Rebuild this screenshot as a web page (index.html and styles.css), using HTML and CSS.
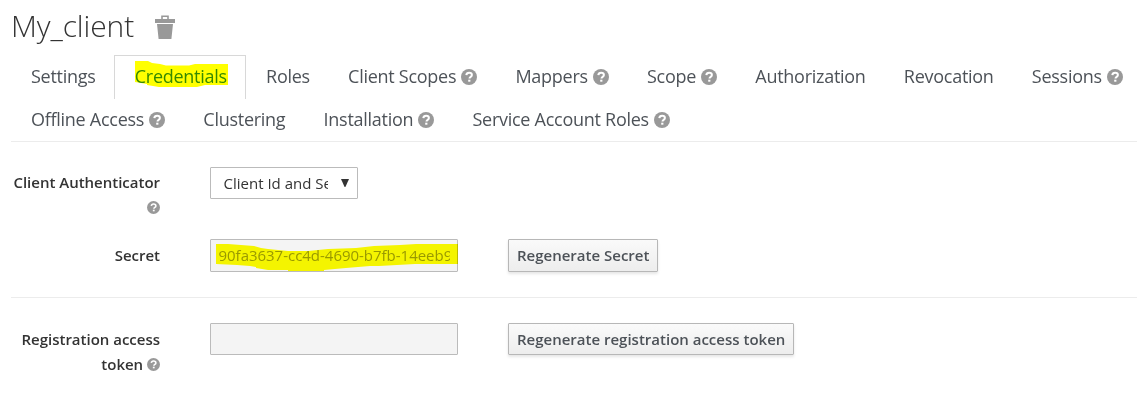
FILE: index.html
```
<!DOCTYPE html>
<html lang="en">
<head>
<meta charset="utf-8">
<title>My_client</title>
<link rel="stylesheet" href="styles.css">
</head>
<body>
<svg width="0" height="0" class="defs" aria-hidden="true">
  <symbol id="help" viewBox="0 0 16 16">
    <circle cx="8" cy="8" r="8" fill="#999"/>
    <path d="M5.3 6.1C5.5 4.5 6.5 3.7 8.1 3.7c1.7 0 2.8.9 2.8 2.3 0 1.9-2.4 1.9-2.4 3.5" fill="none" stroke="#fff" stroke-width="2"/>
    <rect x="7.2" y="10.7" width="2.2" height="2" fill="#fff"/>
  </symbol>
</svg>
<main class="page">
  <header class="title">
    <h1>My_client</h1>
    <svg class="trash" viewBox="0 0 20 24">
      <path d="M7 4V1.2h6V4" fill="none" stroke="#999" stroke-width="1.6"/>
      <path d="M0 4h20v4H0zM2 9h16l-1.6 15H3.6z" fill="#999"/>
    </svg>
  </header>
  <nav class="tabs">
    <div class="row">
      <a class="tab">Settings</a>
      <a class="tab active">Credentials
        <svg class="marker mark-tab" viewBox="0 0 94 27"><path d="M0 0H13L17 2 25 3 31 4.4H54L60 3H93V24H70L62 26H24L12 24V23L0 21Z" fill="#ff0"/></svg></a>
      <a class="tab">Roles</a>
      <a class="tab">Client Scopes<svg class="help"><use href="#help"/></svg></a>
      <a class="tab">Mappers<svg class="help"><use href="#help"/></svg></a>
      <a class="tab">Scope<svg class="help"><use href="#help"/></svg></a>
      <a class="tab">Authorization</a>
      <a class="tab">Revocation</a>
      <a class="tab">Sessions<svg class="help"><use href="#help"/></svg></a>
    </div>
    <div class="row">
      <a class="tab">Offline Access<svg class="help"><use href="#help"/></svg></a>
      <a class="tab">Clustering</a>
      <a class="tab">Installation<svg class="help"><use href="#help"/></svg></a>
      <a class="tab">Service Account Roles<svg class="help"><use href="#help"/></svg></a>
    </div>
  </nav>
  <section class="form">
    <div class="group auth">
      <label>Client Authenticator <svg class="help small"><use href="#help"/></svg></label>
      <div class="select"><span>Client Id and Secret</span><svg viewBox="0 0 8 8"><path d="M0 0H8L4.4 8H3.6Z" fill="#333"/></svg></div>
    </div>
    <div class="group secret">
      <label>Secret</label>
      <div class="field"><span>90fa3637-cc4d-4690-b7fb-14eeb9</span>
        <svg class="marker mark-secret" viewBox="0 0 242 28"><path d="M0 0H12L38 2 45 4 52 5 72 7H92L112 5 140 4 158 2 184 1 200 0H242V20H199L163 22 154 22 130 24 108 26V27H72V26L52 26 40 24V23L34 22 21 21 0 20Z" fill="#ff0"/></svg></div>
      <button>Regenerate Secret</button>
    </div>
    <div class="group token">
      <label>Registration access token <svg class="help small"><use href="#help"/></svg></label>
      <div class="field"></div>
      <button>Regenerate registration access token</button>
    </div>
  </section>
</main>
</body>
</html>
```
FILE: styles.css
```
* { box-sizing: border-box; }
body {
  margin: 0;
  background: #fff;
  color: #333;
  font-family: "Open Sans", sans-serif;
  overflow: hidden;
}
.defs { position: absolute; }
.page { padding-left: 11px; }
.title { display: flex; height: 55px; }
h1 { margin: 5px 0 0; font-size: 30px; line-height: 42px; font-weight: 300; letter-spacing: -.1px; width: 144px; white-space: nowrap; }
.trash { width: 20px; height: 24px; margin-top: 15px; }
.tabs { height: 87px; border-bottom: 1px solid #ececec; }
.row { display: flex; height: 43px; }
.tab {
  position: relative;
  flex: none;
  padding: 0 18.2px 0 20px;
  height: 44px;
  font-size: 18px;
  letter-spacing: -.27px;
  line-height: 43px;
  color: #4d5258;
  white-space: nowrap;
}
.active { border: 1px solid #d8d8d8; border-bottom: 0; color: #358a58; line-height: 41px; }
.help { width: 16px; height: 16px; margin-left: 5px; vertical-align: -2px; }
.help.small { width: 13px; height: 13px; margin-left: 0; vertical-align: -1px; }
.marker { position: absolute; mix-blend-mode: multiply; }
.mark-tab { left: 20px; top: 5px; width: 94px; height: 27px; }
.form { padding-top: 25px; }
.group { display: flex; align-items: flex-start; }
.auth { height: 72px; }
.auth label { padding-top: 3px; }
.secret { height: 59px; border-bottom: 1px solid #ececec; }
.token { padding-top: 25px; }
label {
  width: 149px;
  margin-right: 50px;
  padding-top: 4px;
  text-align: right;
  font-size: 15px;
  font-weight: 600;
  letter-spacing: -.01px;
  line-height: 25px;
}
.field, .select { position: relative; height: 32px; border: 1px solid #bbb; border-radius: 1px; font-size: 15px; line-height: 31px; }
.select { width: 148px; display: flex; align-items: center; padding-left: 12.5px; }
.select span { width: 104.5px; overflow: hidden; white-space: nowrap; }
.select svg { width: 8px; height: 8px; margin-left: 13px; }
.field { width: 248px; margin-right: 50px; padding-left: 7.5px; background: #f4f4f4; color: #999; }
.field span { display: block; width: 231px; overflow: hidden; white-space: nowrap; letter-spacing: -.02px; }
.secret .field { height: 33px; }
.mark-secret { left: 5px; top: 4px; width: 242px; height: 28px; }
button {
  height: 32px;
  padding: 0 8px;
  border: 1px solid #b7b7b7;
  border-radius: 1px;
  background: linear-gradient(#fafafa, #ededed);
  box-shadow: 0 2px 3px rgba(3, 3, 3, .1);
  color: #4d5258;
  font: 600 15px/30px "Open Sans", sans-serif;
  white-space: nowrap;
}
.secret button { height: 33px; padding-bottom: 1px; }
```
